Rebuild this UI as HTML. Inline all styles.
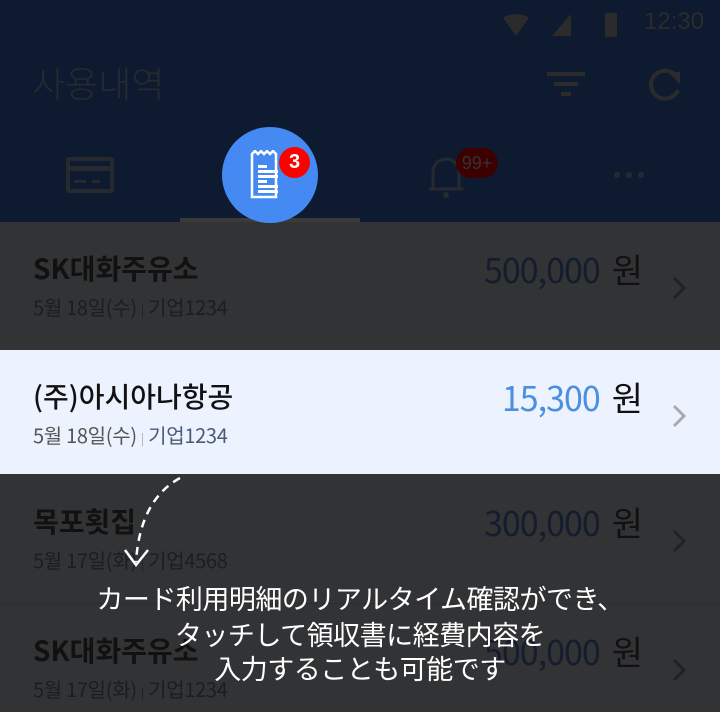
<!DOCTYPE html>
<html><head><meta charset="utf-8"><style>
*{margin:0;padding:0;box-sizing:border-box}
html,body{width:720px;height:712px;overflow:hidden}
body{background:#323335;font-family:"Liberation Sans","Noto Sans CJK KR",sans-serif;position:relative}
.hdr{position:absolute;left:0;top:0;width:720px;height:222px;background:#0d1a30}
.abs{position:absolute}
.row{position:absolute;left:0;width:720px;height:126px}
.name{position:absolute;left:33px;top:26px;font-size:28px;font-weight:bold;color:#111;font-family:"Noto Sans CJK KR",sans-serif}
.sub{position:absolute;left:33px;top:70px;font-size:20px;color:#1c1d1f;font-family:"Noto Sans CJK KR",sans-serif;letter-spacing:-0.3px}
.amt{position:absolute;right:78px;top:22px;font-size:34px;color:#131d2e;font-family:"Noto Sans CJK KR",sans-serif;letter-spacing:-1px}
.amt span{color:#111;margin-left:12px}
.chev{position:absolute;right:34px;top:54px}
.jp{position:absolute;left:0;width:720px;text-align:center;color:#fff;font-size:27px;font-family:"Noto Sans CJK JP",sans-serif;letter-spacing:-0.5px}
</style></head><body>
<div class="hdr">
  <svg class="abs" style="left:502px;top:13px" width="28" height="24"><path d="M1 5 Q14 -3 27 5 L14 23Z" fill="#2b2b2b"/></svg>
  <svg class="abs" style="left:552px;top:14px" width="20" height="22"><path d="M0 22 L19 0 V22Z" fill="#2b2b2b"/></svg>
  <div class="abs" style="left:605px;top:13px;width:12px;height:24px;background:#2b2b2b;border-radius:2px"></div>
  <div class="abs" style="left:644px;top:8px;font-size:24px;color:#2b2b2b">12:30</div>
  <div class="abs" style="left:32px;top:56px;font-size:36px;color:#262a2f;font-family:'Noto Sans CJK KR',sans-serif;font-weight:300">사용내역</div>
  <div class="abs" style="left:547px;top:72px;width:38px;height:4px;background:#2b2b2b"></div>
  <div class="abs" style="left:554px;top:82px;width:24px;height:4px;background:#2b2b2b"></div>
  <div class="abs" style="left:561px;top:92px;width:10px;height:4px;background:#2b2b2b"></div>
  <svg class="abs" style="left:646px;top:66px" width="38" height="38"><path d="M30 10 A14 14 0 1 0 32 24" fill="none" stroke="#2b2b2b" stroke-width="4"/><path d="M22 6 H34 V18Z" fill="#2b2b2b"/></svg>
  <div class="abs" style="left:66px;top:157px;width:48px;height:36px;border:4px solid #262a2f;border-radius:3px"></div>
  <div class="abs" style="left:66px;top:166px;width:48px;height:5px;background:#262a2f"></div>
  <div class="abs" style="left:74px;top:180px;width:12px;height:3px;background:#262a2f"></div>
  <div class="abs" style="left:92px;top:180px;width:8px;height:3px;background:#262a2f"></div>
  <svg class="abs" style="left:428px;top:150px" width="36" height="50"><path d="M5 38 V22 A13 13 0 0 1 31 22 V38" fill="none" stroke="#262a2f" stroke-width="3"/><path d="M1 39 H35" stroke="#262a2f" stroke-width="3"/><circle cx="18" cy="45" r="3" fill="#262a2f"/></svg>
  <div class="abs" style="left:456px;top:148px;width:42px;height:30px;border-radius:15px;background:#3d0000;color:#333;font-size:18px;text-align:center;line-height:30px">99+</div>
  <div class="abs" style="left:614px;top:172px;width:6px;height:6px;border-radius:3px;background:#262a2f"></div>
  <div class="abs" style="left:626px;top:172px;width:6px;height:6px;border-radius:3px;background:#262a2f"></div>
  <div class="abs" style="left:638px;top:172px;width:6px;height:6px;border-radius:3px;background:#262a2f"></div>
  <div class="abs" style="left:180px;top:218px;width:180px;height:4px;background:#3a3a3a"></div>
  <div class="abs" style="left:222px;top:127px;width:96px;height:96px;border-radius:50%;background:#448af2"></div>
  <svg class="abs" style="left:250px;top:150px" width="40" height="50"><path d="M2 4 l3 -3 3 3 3 -3 3 3 3 -3 3 3 3 -3 3 3 V47 H2Z" fill="none" stroke="#fff" stroke-width="2.5"/><rect x="8" y="15" width="9" height="3" fill="#fff"/><rect x="8" y="20" width="20" height="3" fill="#fff"/><rect x="8" y="25" width="20" height="3" fill="#fff"/><rect x="8" y="30" width="9" height="3" fill="#fff"/><rect x="8" y="35" width="20" height="3" fill="#fff"/><rect x="8" y="40" width="20" height="3" fill="#fff"/></svg>
  <div class="abs" style="left:279px;top:147px;width:31px;height:31px;border-radius:50%;background:#f00;color:#fff;font-size:20px;font-weight:bold;text-align:center;line-height:31px">3</div>
</div>

<div class="row" style="top:222px">
  <div class="name">SK대화주유소</div><div class="sub">5월 18일(수) <span style="font-size:12px">|</span> 기업1234</div>
  <div class="amt">500,000<span>원</span></div>
  <svg class="chev" width="14" height="24"><path d="M2 2 L12 12 L2 22" fill="none" stroke="#222" stroke-width="3"/></svg>
</div>
<div class="row" style="top:350px;height:124px;background:#edf3fe">
  <div class="name" style="font-weight:500;color:#111">(주)아시아나항공</div><div class="sub" style="color:#555">5월 18일(수) <span style="font-size:12px;color:#aaa">|</span> <span style="color:#4a5a7a">기업1234</span></div>
  <div class="amt" style="color:#4a8fe0">15,300<span>원</span></div>
  <svg class="chev" width="14" height="24"><path d="M2 2 L12 12 L2 22" fill="none" stroke="#aaa" stroke-width="3"/></svg>
</div>
<div class="row" style="top:475px">
  <div class="name">목포횟집</div><div class="sub">5월 17일(화) <span style="font-size:12px">|</span> 기업4568</div>
  <div class="amt">300,000<span>원</span></div>
  <svg class="chev" width="14" height="24"><path d="M2 2 L12 12 L2 22" fill="none" stroke="#222" stroke-width="3"/></svg>
</div>
<div class="abs" style="left:0;top:603px;width:720px;height:1px;background:#2c2d2f"></div>
<div class="row" style="top:604px">
  <div class="name">SK대화주유소</div><div class="sub">5월 17일(화) <span style="font-size:12px">|</span> 기업1234</div>
  <div class="amt">500,000<span>원</span></div>
  <svg class="chev" width="14" height="24"><path d="M2 2 L12 12 L2 22" fill="none" stroke="#222" stroke-width="3"/></svg>
</div>

<svg class="abs" style="left:110px;top:470px" width="80" height="100"><path d="M70 8 Q30 30 26 92" fill="none" stroke="#fff" stroke-width="2.5" stroke-dasharray="8 6"/><path d="M15 80 L26 95 L38 80" fill="none" stroke="#fff" stroke-width="2.5"/></svg>
<div class="jp" style="top:578px">カード利用明細のリアルタイム確認ができ、</div>
<div class="jp" style="top:614px">タッチして領収書に経費内容を</div>
<div class="jp" style="top:648px">入力することも可能です</div>
</body></html>
